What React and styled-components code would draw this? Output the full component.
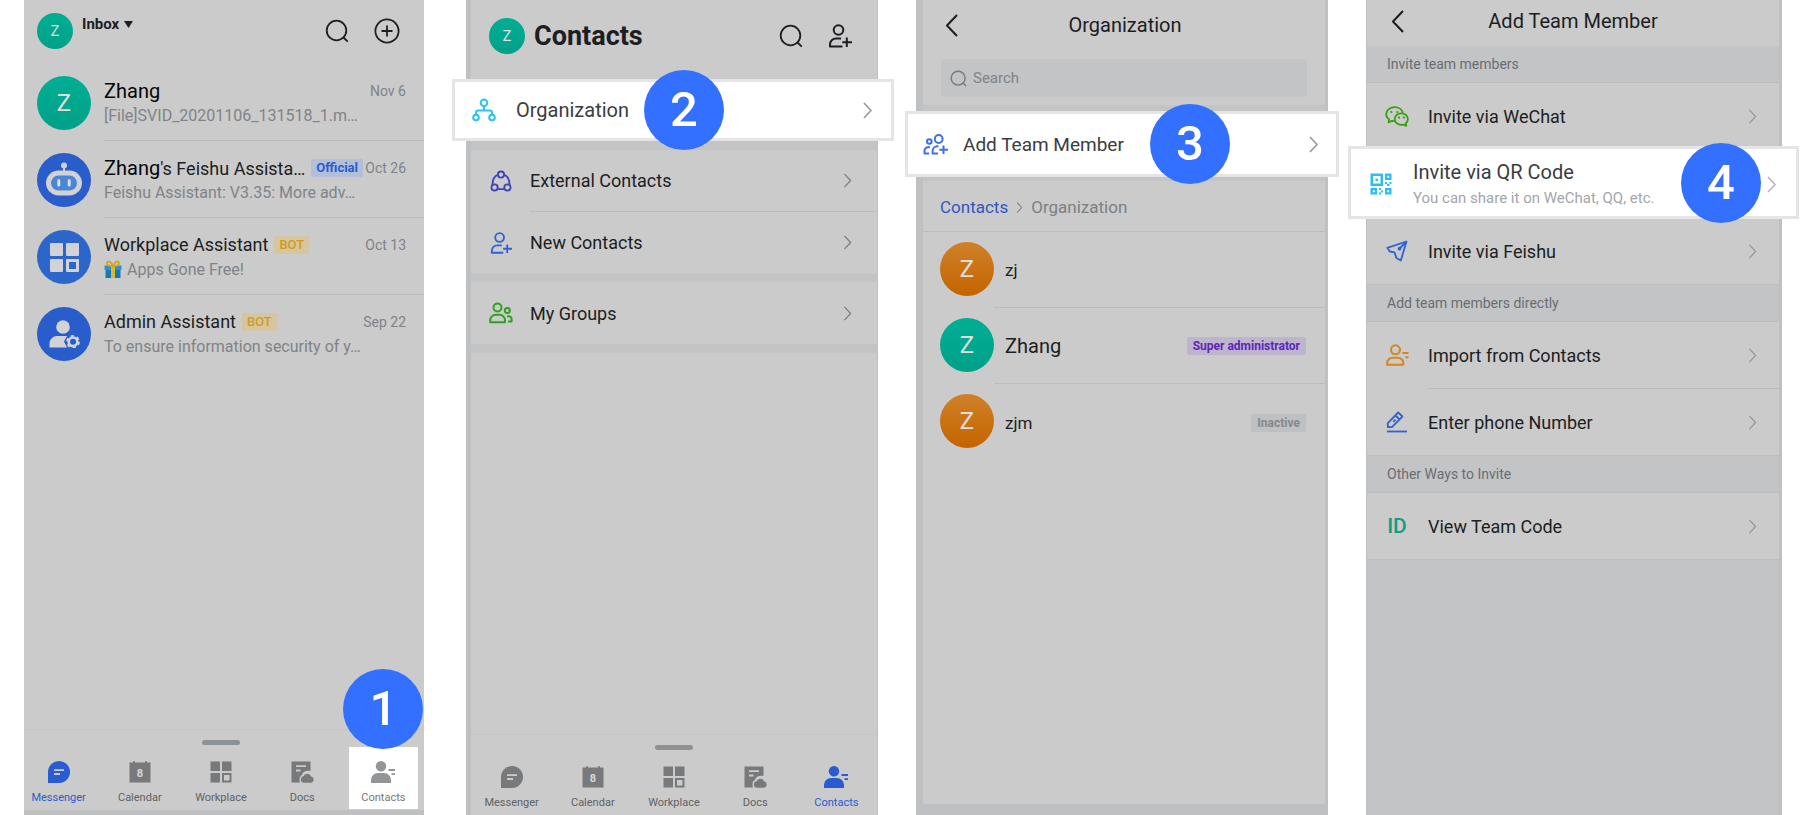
import React from "react";
import styled, { createGlobalStyle, css } from "styled-components";

const GlobalStyle = createGlobalStyle`
  * {
    box-sizing: border-box;
  }

  body {
    margin: 0;
    background: #fff;
    color: #1c1e22;
    font-family: Roboto, "Liberation Sans", sans-serif;
  }

  button,
  input {
    padding: 0;
    border: 0;
    background: none;
    color: inherit;
    font: inherit;
  }

  h1,
  h2,
  h3,
  p,
  ul {
    margin: 0;
    padding: 0;
    font-weight: 400;
  }

  svg {
    display: block;
    flex: none;
  }
`;

const Guide = styled.main`
  display: grid;
  grid-template-columns: 404fr 412fr 412fr 416fr;
  column-gap: 38px;
  min-height: 100vh;
  padding: 0 19px 0 24px;
`;

const Phone = styled.section`
  display: flex;
  flex-direction: column;
  min-width: 0;
  background: #cbcbcb;
  border: 0 solid #bec0c2;
`;

const InboxPhone = styled(Phone)`
  margin-right: 4px;
  border-bottom-width: 5px;
`;

const ContactsPhone = styled(Phone)`
  border-left-width: 5px;
  border-right-width: 1px;
`;

const OrganizationPhone = styled(Phone)`
  border-width: 0 3px 11px 7px;
`;

const InvitePhone = styled(Phone)`
  border-width: 0 3px 0 1px;
  background: #c3c4c6;
`;

const Header = styled.header`
  display: flex;
  flex: none;
  align-items: center;
  height: ${(p) => p.$height}px;
  padding: ${(p) => p.$padding};
`;

const Actions = styled.div`
  display: flex;
  gap: 25px;
  margin-left: auto;
`;

const IconButton = styled.button`
  display: block;
`;

const Avatar = styled.span`
  display: flex;
  flex: none;
  align-items: center;
  justify-content: center;
  width: ${(p) => p.$size}px;
  height: ${(p) => p.$size}px;
  border-radius: 50%;
  background: ${(p) => p.$bg || "linear-gradient(#00ae94, #00a188)"};
  color: #dedede;
  font-size: ${(p) => (p.$size > 40 ? 24 : 15)}px;
`;

const orange = "linear-gradient(#cf8128, #c56400)";

const InboxButton = styled.button`
  display: flex;
  align-items: center;
  align-self: flex-start;
  gap: 5px;
  height: 22px;
  margin: 13px 0 0 9px;
  font-size: 15px;
  font-weight: 700;
`;

const PageName = styled.h1`
  margin-left: 9px;
  font-size: 27px;
  font-weight: 700;
`;

const Messages = styled.ul`
  flex: 1;
  list-style: none;
`;

const Message = styled.li`
  display: flex;
  height: 77px;
  padding: 12px 0 0 13px;
  gap: 13px;
`;

const MessageBody = styled.div`
  flex: 1;
  min-width: 0;
  padding: 2px 18px 0 0;
  border-bottom: ${(p) => (p.$last ? "0" : "1px")} solid #bbbdbf;
`;

const MessageTitle = styled.div`
  display: flex;
  align-items: center;
  height: 25px;
  font-size: 18px;
  white-space: nowrap;

  h3 {
    font-size: inherit;
  }

  big {
    color: #050505;
    font-size: 20px;
  }

  time {
    margin-left: auto;
    color: #808387;
    font-size: 14px;
  }
`;

const Preview = styled.p`
  display: flex;
  align-items: center;
  gap: 5px;
  height: 24px;
  color: #808387;
  font-size: 16px;
  white-space: nowrap;
`;

const tagColors = {
  blue: css`
    background: #b3bfd9;
    color: #2a5bd0;
    font-weight: 700;
  `,
  yellow: css`
    background: #d5c69f;
    color: #d49a1c;
    font-weight: 500;
  `,
  purple: css`
    background: #bfb4cd;
    color: #5b26b8;
    font-weight: 700;
  `,
  grey: css`
    background: #bec0c2;
    color: #85888c;
    font-weight: 700;
  `,
};

const Tag = styled.span`
  height: 18px;
  margin-left: 6px;
  padding: 0 5px;
  border-radius: 2px;
  font-size: 13px;
  line-height: 18px;
  ${(p) => tagColors[p.$color]}
`;

const RoleTag = styled(Tag)`
  margin-left: auto;
  padding: 0 6px;
  font-size: 12px;
`;

const TabBar = styled.nav`
  flex: none;
  height: 81px;
  padding-top: 10px;
  border-top: 1px solid #c5c6c7;
`;

const TabBarInner = styled.div`
  margin-left: ${(p) => p.$shift || 0}px;
`;

const Grabber = styled.div`
  width: 38px;
  height: 5px;
  margin: 0 auto;
  border-radius: 3px;
  background: #8f9294;
`;

const Tabs = styled.div`
  display: grid;
  grid-template-columns: repeat(5, 1fr);
  padding-top: 2px;
`;

const TabCell = styled.div`
  position: relative;
  padding: 0 6px;
`;

const Tab = styled.button`
  display: flex;
  flex-direction: column;
  align-items: center;
  gap: 8px;
  width: 100%;
  height: 62px;
  padding-top: 14px;
  color: ${(p) => (p.$active ? "#2a5bd0" : "#77797b")};
  font-size: 11px;
  line-height: 13px;

  span {
    color: ${(p) => (p.$active ? "#2a5bd0" : "#5f6164")};
  }

  ${(p) =>
    p.$spotlight &&
    css`
      background: #fff;
      color: #939597;

      span {
        color: #75787b;
      }
    `}
`;

const Step = styled.strong`
  position: absolute;
  z-index: 2;
  top: calc(50% - 40px);
  left: ${(p) => p.$left}px;
  width: 80px;
  height: 80px;
  border-radius: 50%;
  background: #3370ff;
  color: #fff;
  font-size: 49px;
  font-weight: 500;
  line-height: 80px;
  text-align: center;
`;

const TabStep = styled(Step)`
  top: -78px;
  left: calc(50% - 40px);
`;

const Row = styled.button`
  display: flex;
  flex: none;
  align-items: center;
  width: 100%;
  height: ${(p) => p.$height || 61}px;
  padding: 0 ${(p) => p.$end || 25}px 0 18px;
  font-size: 18px;
  text-align: left;

  > svg:last-child {
    margin-left: auto;
    color: ${(p) => p.$arrow || "#808386"};
  }
`;

const RowIcon = styled.span`
  display: flex;
  flex: none;
  align-items: center;
  justify-content: center;
  width: 24px;
  margin-right: ${(p) => p.$gap || 17}px;
  color: ${(p) => p.$color};
  font-size: 21px;
  font-weight: 500;
`;

const Separator = styled.hr`
  flex: none;
  width: auto;
  height: 1px;
  margin: 0 0 0 ${(p) => p.$inset || 0}px;
  border: 0;
  background: #bcbdbf;
`;

const Band = styled.div`
  flex: none;
  height: ${(p) => p.$height}px;
  background: #c2c4c6;
`;

const Spotlight = styled.div`
  position: relative;
  z-index: 1;
  flex: none;
  margin: ${(p) => p.$margin};
  border: 3px solid #e5e5e5;
  background: #fff;
`;

const SpotlightRow = styled(Row)`
  height: ${(p) => p.$height}px;
  padding: ${(p) => p.$padding};
  color: #3a3d42;
  font-size: ${(p) => p.$size || 20}px;

  small {
    display: block;
    margin-top: 4px;
    color: #a3a6ab;
    font-size: 15px;
    line-height: 20px;
  }
`;

const TitleBar = styled(Header)`
  display: grid;
  grid-template-columns: 34px 1fr 34px;

  h1 {
    font-size: 20px;
    text-align: center;
  }
`;

const SearchBox = styled.label`
  display: flex;
  flex: none;
  align-items: center;
  gap: 6px;
  height: 38px;
  margin: 9px 18px 8px;
  padding: 0 9px;
  border-radius: 4px;
  background: #c2c4c6;
  color: #76797d;

  input {
    flex: 1;
    min-width: 0;
    font-size: 15px;
    outline: 0;
  }

  input::placeholder {
    color: #808387;
    opacity: 1;
  }
`;

const Breadcrumb = styled.nav`
  display: flex;
  flex: none;
  align-items: center;
  gap: 8px;
  height: 50px;
  padding: 2px 17px 0;
  color: #7c7f83;
  font-size: 17px;

  a {
    color: #2f58bd;
    text-decoration: none;
  }
`;

const MemberList = styled.ul`
  border-top: 1px solid #bbbdbf;
  list-style: none;
`;

const Member = styled.li`
  display: flex;
  height: 76px;
  padding: 10px 0 0 17px;
`;

const MemberBody = styled.div`
  display: flex;
  flex: 1;
  align-items: center;
  padding: 0 19px 9px 11px;
  border-bottom: ${(p) => (p.$last ? "0" : "1px")} solid #bbbdbf;
  font-size: ${(p) => p.$size || 17}px;
`;

const Group = styled.div`
  display: flex;
  flex-direction: column;
  background: #cbcbcb;
`;

const GroupTitle = styled.h2`
  height: ${(p) => (p.$first ? 37 : 38)}px;
  padding-left: 20px;
  border: 0 solid #bbbdbf;
  border-width: ${(p) => (p.$first ? "0 0 1px" : "1px 0")};
  background: #c2c4c6;
  color: #6a6d71;
  font-size: 14px;
  line-height: 37px;
`;

const stroke = {
  fill: "none",
  stroke: "currentColor",
  strokeWidth: 2,
  strokeLinejoin: "round",
};

const SearchIcon = ({ size = 24, weight = 1.8 }) => (
  <svg width={size} height={size} viewBox="0 0 24 24" {...stroke} strokeWidth={weight}>
    <circle cx="11.5" cy="11.5" r="9.8" />
    <path d="M18.5 18.5l4.2 4.2" />
  </svg>
);

const PlusCircleIcon = () => (
  <svg width="26" height="26" viewBox="0 0 26 26" {...stroke} strokeWidth="1.8">
    <circle cx="13" cy="13" r="11.6" />
    <path d="M13 7.5v11M7.5 13h11" />
  </svg>
);

const Chevron = ({ width = 9, height = 17 }) => (
  <svg width={width} height={height} viewBox="0 0 9 17" {...stroke} strokeWidth="1.6">
    <path d="M1 1l7 7.5L1 16" />
  </svg>
);

const BackIcon = () => (
  <svg width="13" height="23" viewBox="0 0 13 23" {...stroke}>
    <path d="M12 1L2 11.5 12 22" />
  </svg>
);

const UserPlusIcon = ({ size = 24 }) => (
  <svg width={size} height={size} viewBox="0 0 24 24" {...stroke}>
    <circle cx="10.5" cy="6" r="4.8" />
    <path d="M13 14.5H8a6 6 0 0 0-6 6v2.1h12.5M18.8 13.5v9.500M14.3 18.3H24" />
  </svg>
);

const OrgIcon = () => (
  <svg width="24" height="24" viewBox="0 0 24 24" {...stroke}>
    <circle cx="12" cy="4.7" r="3.3" />
    <path d="M12 8v4.5M4 16.5v-1.7a2.3 2.3 0 0 1 2.3-2.3h11.4a2.3 2.3 0 0 1 2.3 2.3v1.7" />
    <circle cx="4" cy="19.6" r="2.8" />
    <circle cx="20" cy="19.6" r="2.8" />
  </svg>
);

const ExternalIcon = () => (
  <svg width="22" height="22" viewBox="0 0 24 24" {...stroke}>
    <circle cx="12" cy="5" r="3.4" />
    <circle cx="5" cy="19" r="3.4" />
    <circle cx="19" cy="19" r="3.4" />
    <path d="M8.6 5.2C4.8 6.8 2.6 11 2.8 16.2M15.4 5.2c3.8 1.6 6 5.8 5.8 11M8.2 20.8h7.6" />
  </svg>
);

const GroupIcon = () => (
  <svg width="24" height="22" viewBox="0 0 24 22" {...stroke}>
    <circle cx="8.5" cy="5.5" r="4" />
    <path d="M1.2 20.3v-2a5.5 5.5 0 0 1 5.5-5.5h3.8a5.5 5.5 0 0 1 5.5 5.5v2z" />
    <circle cx="18.3" cy="8.4" r="2.5" />
    <path d="M18 14.2h1.6a3 3 0 0 1 3 3v2.4h-3.6" />
  </svg>
);

const TeamPlusIcon = () => (
  <svg width="25" height="21" viewBox="0 0 25 21" {...stroke}>
    <circle cx="15.7" cy="5" r="3.9" />
    <circle cx="6.3" cy="7.5" r="2.3" />
    <path d="M15.5 12.3h-1.1a4.8 4.8 0 0 0-4.8 4.8v2.3H15M7 13.2H5.3A3.8 3.8 0 0 0 1.5 17v2.4h4.6M20.5 11.5V20M16.3 15.8H25" />
  </svg>
);

const WeChatIcon = () => (
  <svg width="24" height="21" viewBox="0 0 24 21" {...stroke} strokeWidth="1.8">
    <path d="M9.6 15.1a11 11 0 0 1-2.5-.3L3.6 16.4l.4-3.1C2.2 12 1.2 10.2 1.2 8.2c0-4 3.9-7.1 8.5-7.1 4 0 7.4 2.4 8.2 5.6" />
    <path d="M16.3 7.3c3.7 0 6.6 2.5 6.6 5.7 0 1.7-.8 3.1-2.1 4.2l.5 2.6-2.9-1.2c-.7.2-1.4.2-2.1.2-3.7 0-6.6-2.6-6.6-5.8s2.9-5.7 6.6-5.7z" />
    <path d="M6.3 6h.1M12.3 6h.1M14 11.6h.1M18.8 11.6h.1" strokeWidth="2.2" strokeLinecap="round" />
  </svg>
);

const QrIcon = () => (
  <svg width="22" height="22" viewBox="0 0 22 22" fill="currentColor">
    <path fillRule="evenodd" d="M.5.5H13V13H.5zM3 3v7.5h7.5V3z" />
    <path d="M5.5 5.5H8V8H5.5z" />
    <path fillRule="evenodd" d="M15 .5h6.5V7H15zM17.2 2.8v2h2v-2zM.5 15H7v6.5H.5zM2.8 17.2v2h2v-2zM15 15h6.5v6.5H15zM17.2 17.2v2h2v-2z" />
    <path d="M15 9h2v2h-2zM19.5 9h2v2h-2zM17 11h2.5v2H17zM9 15h2v2H9zM11 17.5h2v2h-2zM9 19.5h2v2H9z" />
  </svg>
);

const PlaneIcon = () => (
  <svg width="22" height="22" viewBox="0 0 22 22" {...stroke} strokeWidth="1.8">
    <path d="M20.5 1.5L1.3 7.8l2.5 3.7 4.7.8 1.9 5.600 4.400 2.600z" />
    <path d="M20.5 1.5l-6.800 7" />
    <circle cx="13.5" cy="8.7" r="1" fill="currentColor" />
  </svg>
);

const ImportIcon = () => (
  <svg width="23" height="22" viewBox="0 0 23 22" {...stroke}>
    <circle cx="9.5" cy="5.8" r="4.5" />
    <path d="M1.2 20.7v-1.5a5.5 5.5 0 0 1 5.5-5.5h5.1a5.5 5.5 0 0 1 5.5 5.5v1.5zM16.5 9h6M19.5 13.3h3" />
  </svg>
);

const PenIcon = () => (
  <svg width="22" height="22" viewBox="0 0 22 22" {...stroke} strokeWidth="1.8">
    <path d="M1.8 12.2L12.2 1.5l4.2 4L6 16.2H1.8zM9.5 4.5l4 4M7.3 10.8l2.2-2.2" />
    <path d="M1 20.5h20" />
  </svg>
);

const BotIcon = () => (
  <svg width="54" height="54" viewBox="0 0 54 54">
    <circle cx="27" cy="12.5" r="3" fill="#d0d0d4" />
    <path d="M26 14h2v6h-2z" fill="#d0d0d4" />
    <rect x="9" y="17.5" width="36" height="25" rx="12.5" fill="#d2d2d4" />
    <rect x="14" y="22.5" width="26" height="15" rx="7.5" fill="#4a86d8" />
    <path d="M21.8 27.5V32M32.2 27.5V32" stroke="#dcdee2" strokeWidth="3" strokeLinecap="round" />
  </svg>
);

const AppsIcon = () => (
  <svg width="30" height="30" viewBox="0 0 30 30" fill="#d2d3d6">
    <rect x="1" y="1" width="13" height="13" rx="1" />
    <rect x="17" y="1" width="13" height="13" rx="1" />
    <rect x="1" y="17" width="13" height="13" rx="1" />
    <path fillRule="evenodd" d="M18 17h11a1 1 0 0 1 1 1v11a1 1 0 0 1-1 1H18a1 1 0 0 1-1-1V18a1 1 0 0 1 1-1zm2 3v7h7v-7z" />
  </svg>
);

const AdminIcon = () => (
  <svg width="32" height="28" viewBox="0 0 32 28" fill="#d2d3d6">
    <circle cx="15" cy="7" r="6.8" />
    <path d="M1.5 27.5v-4A7.5 7.5 0 0 1 9 16h10l-3 5.500 3 6z" />
    <circle cx="25" cy="21.8" r="4.3" fill="none" stroke="#d2d3d6" strokeWidth="2.6" />
    <circle
      cx="25"
      cy="21.8"
      r="6"
      fill="none"
      stroke="#d2d3d6"
      strokeWidth="1.8"
      strokeDasharray="3.2 3.08"
    />
  </svg>
);

const GiftIcon = () => (
  <svg width="18" height="19" viewBox="0 0 18 19">
    <path d="M1.5 9h15v9h-15z" fill="#1679b4" />
    <path d="M.5 5.5h17V10H.5z" fill="#2b93cb" />
    <path d="M7 5.5h4V18H7z" fill="#dfb62c" />
    <path d="M9 6C6 6 2.5 5.5 3 3s4-2 6 3c2-5 5.5-5.5 6-3s-3 3-6 3z" fill="none" stroke="#d3a51f" strokeWidth="1.8" />
  </svg>
);

const tabIcons = {
  Messenger: (
    <svg width="22" height="22" viewBox="0 0 22 22">
      <path d="M0 22V11a11 11 0 1 1 11 11z" fill="currentColor" />
      <path d="M6 9.2h10M6 13h6" stroke="#cbcbcb" strokeWidth="1.8" />
    </svg>
  ),
  Calendar: (
    <svg width="22" height="22" viewBox="0 0 22 22">
      <path d="M.5 1.5H4V.3h2v1.2h10V.3h2v1.2h3.5v20H.5z" fill="currentColor" />
      <text x="11" y="15.5" fill="#d8d8d8" fontSize="11" fontWeight="700" textAnchor="middle">
        8
      </text>
    </svg>
  ),
  Workplace: (
    <svg width="22" height="22" viewBox="0 0 22 22" fill="currentColor">
      <path d="M.5.5H10V10H.5zM12 .5h9.5V10H12zM.5 12H10v9.5H.5z" />
      <path fillRule="evenodd" d="M12 12h9.5v9.5H12zM14 14v5.5h5.5V14z" />
    </svg>
  ),
  Docs: (
    <svg width="23" height="22" viewBox="0 0 23 22">
      <path d="M.5.5h19V10c-5-1-8 1-8.500 4-2.500 1-3 4-2 7.500H.5z" fill="currentColor" />
      <path d="M5 5.2h10M5 9.5h4.500" stroke="#cbcbcb" strokeWidth="1.8" />
      <path d="M13 21.8a3.3 3.3 0 0 1-.6-6.5 4.2 4.2 0 0 1 7.8.2 3.2 3.2 0 0 1-.5 6.3z" fill="currentColor" />
    </svg>
  ),
  Contacts: (
    <svg width="24" height="22" viewBox="0 0 24 22">
      <circle cx="10" cy="5.2" r="5.2" fill="currentColor" />
      <path d="M0 22v-3a7 7 0 0 1 7-7h6a7 7 0 0 1 7 7v3z" fill="currentColor" />
      <path d="M17.5 9H24M20.500 13.200H24" stroke="currentColor" strokeWidth="1.8" />
    </svg>
  ),
};

const BottomTabs = ({ active, spotlight, shift }) => (
  <TabBar>
    <TabBarInner $shift={shift}>
      <Grabber />
      <Tabs>
        {Object.keys(tabIcons).map((name) => (
          <TabCell key={name}>
            <Tab $active={name === active} $spotlight={name === spotlight}>
              {tabIcons[name]}
              <span>{name}</span>
            </Tab>
            {name === spotlight && <TabStep>1</TabStep>}
          </TabCell>
        ))}
      </Tabs>
    </TabBarInner>
  </TabBar>
);

const MenuRow = ({ icon, color, height, children }) => (
  <Row $height={height}>
    <RowIcon $color={color}>{icon}</RowIcon>
    {children}
    <Chevron height={15} />
  </Row>
);

const InviteRow = ({ icon, color, children }) => (
  <Row $height={66} $end={22} $arrow="#999b9d">
    <RowIcon $color={color} $gap={19}>
      {icon}
    </RowIcon>
    {children}
    <Chevron height={15} />
  </Row>
);

const Inbox = () => (
  <InboxPhone>
    <Header $height={64} $padding="0 24px 2px 13px">
      <Avatar $size={36}>Z</Avatar>
      <InboxButton>
        Inbox
        <svg width="9" height="7" viewBox="0 0 9 7" fill="currentColor">
          <path d="M0 0h9L4.5 7z" />
        </svg>
      </InboxButton>
      <Actions>
        <IconButton aria-label="Search">
          <SearchIcon />
        </IconButton>
        <IconButton aria-label="Create">
          <PlusCircleIcon />
        </IconButton>
      </Actions>
    </Header>
    <Messages>
      <Message>
        <Avatar $size={54}>Z</Avatar>
        <MessageBody>
          <MessageTitle>
            <h3>
              <big>Zhang</big>
            </h3>
            <time>Nov 6</time>
          </MessageTitle>
          <Preview>[File]SVID_20201106_131518_1.m…</Preview>
        </MessageBody>
      </Message>
      <Message>
        <Avatar $size={54} $bg="#285dcb">
          <BotIcon />
        </Avatar>
        <MessageBody>
          <MessageTitle>
            <h3>
              <big>Zhang</big>'s Feishu Assista…
            </h3>
            <Tag $color="blue">Official</Tag>
            <time>Oct 26</time>
          </MessageTitle>
          <Preview>Feishu Assistant: V3.35: More adv…</Preview>
        </MessageBody>
      </Message>
      <Message>
        <Avatar $size={54} $bg="#2d66cb">
          <AppsIcon />
        </Avatar>
        <MessageBody>
          <MessageTitle>
            <h3>Workplace Assistant</h3>
            <Tag $color="yellow">BOT</Tag>
            <time>Oct 13</time>
          </MessageTitle>
          <Preview>
            <GiftIcon /> Apps Gone Free!
          </Preview>
        </MessageBody>
      </Message>
      <Message>
        <Avatar $size={54} $bg="#285dcb">
          <AdminIcon />
        </Avatar>
        <MessageBody $last>
          <MessageTitle>
            <h3>Admin Assistant</h3>
            <Tag $color="yellow">BOT</Tag>
            <time>Sep 22</time>
          </MessageTitle>
          <Preview>To ensure information security of y…</Preview>
        </MessageBody>
      </Message>
    </Messages>
    <BottomTabs active="Messenger" spotlight="Contacts" shift={-6} />
  </InboxPhone>
);

const Contacts = () => (
  <ContactsPhone>
    <Header $height={79} $padding="0 25px 8px 18px">
      <Avatar $size={36}>Z</Avatar>
      <PageName>Contacts</PageName>
      <Actions>
        <IconButton aria-label="Search">
          <SearchIcon />
        </IconButton>
        <IconButton aria-label="Add contact">
          <UserPlusIcon />
        </IconButton>
      </Actions>
    </Header>
    <Spotlight $margin="0 -17px 0 -19px">
      <SpotlightRow $height={56} $padding="0 19px 0 17px" $arrow="#96989f">
        <RowIcon $color="#29c3f5" $gap={20}>
          <OrgIcon />
        </RowIcon>
        Organization
        <Chevron />
      </SpotlightRow>
      <Step $left={189}>2</Step>
    </Spotlight>
    <Band $height={9} />
    <MenuRow icon={<ExternalIcon />} color="#3f44b4">
      External Contacts
    </MenuRow>
    <Separator $inset={59} />
    <MenuRow icon={<UserPlusIcon size={22} />} color="#2f62d4">
      New Contacts
    </MenuRow>
    <Band $height={9} />
    <MenuRow icon={<GroupIcon />} color="#2ea121" height={62}>
      My Groups
    </MenuRow>
    <Band $height={9} />
    <Messages as="div" />
    <BottomTabs active="Contacts" />
  </ContactsPhone>
);

const Organization = () => (
  <OrganizationPhone>
    <TitleBar $height={50} $padding="0 20px 0 22px">
      <IconButton aria-label="Back">
        <BackIcon />
      </IconButton>
      <h1>Organization</h1>
    </TitleBar>
    <SearchBox>
      <SearchIcon size={17} weight={2} />
      <input type="search" placeholder="Search" aria-label="Search" />
    </SearchBox>
    <Band $height={6} />
    <Spotlight $margin="0 -14px 0 -18px">
      <SpotlightRow $height={60} $padding="0 18px 0 15px" $size={19} $arrow="#96989f">
        <RowIcon $color="#3f6fe8" $gap={16}>
          <TeamPlusIcon />
        </RowIcon>
        Add Team Member
        <Chevron />
      </SpotlightRow>
      <Step $left={242}>3</Step>
    </Spotlight>
    <Band $height={4} />
    <Breadcrumb>
      <a href="#contacts">Contacts</a>
      <Chevron width={7} height={11} />
      <span>Organization</span>
    </Breadcrumb>
    <MemberList>
      <Member>
        <Avatar $size={54} $bg={orange}>
          Z
        </Avatar>
        <MemberBody>zj</MemberBody>
      </Member>
      <Member>
        <Avatar $size={54}>Z</Avatar>
        <MemberBody $size={20}>
          Zhang
          <RoleTag $color="purple">Super administrator</RoleTag>
        </MemberBody>
      </Member>
      <Member>
        <Avatar $size={54} $bg={orange}>
          Z
        </Avatar>
        <MemberBody $last>
          zjm
          <RoleTag $color="grey">Inactive</RoleTag>
        </MemberBody>
      </Member>
    </MemberList>
  </OrganizationPhone>
);

const AddTeamMember = () => (
  <InvitePhone>
    <Group>
      <TitleBar $height={46} $padding="0 24px 4px 24px">
        <IconButton aria-label="Back">
          <BackIcon />
        </IconButton>
        <h1>Add Team Member</h1>
      </TitleBar>
      <GroupTitle $first>Invite team members</GroupTitle>
      <InviteRow icon={<WeChatIcon />} color="#37a10c">
        Invite via WeChat
      </InviteRow>
      <Spotlight $margin="-3px -20px -1px -19px">
        <SpotlightRow $height={67} $padding="3px 20px 0 18px" $arrow="#b4b6b9">
          <RowIcon $color="#29bff5" $gap={20}>
            <QrIcon />
          </RowIcon>
          <div>
            Invite via QR Code
            <small>You can share it on WeChat, QQ, etc.</small>
          </div>
          <Chevron />
        </SpotlightRow>
        <Step $left={330}>4</Step>
      </Spotlight>
      <InviteRow icon={<PlaneIcon />} color="#2f62d4">
        Invite via Feishu
      </InviteRow>
      <GroupTitle>Add team members directly</GroupTitle>
      <InviteRow icon={<ImportIcon />} color="#d4861f">
        Import from Contacts
      </InviteRow>
      <Separator $inset={61} />
      <InviteRow icon={<PenIcon />} color="#2f62d4">
        Enter phone Number
      </InviteRow>
      <GroupTitle>Other Ways to Invite</GroupTitle>
      <InviteRow icon="ID" color="#109e88">
        View Team Code
      </InviteRow>
      <Separator />
    </Group>
  </InvitePhone>
);

const App = () => (
  <>
    <GlobalStyle />
    <Guide>
      <Inbox />
      <Contacts />
      <Organization />
      <AddTeamMember />
    </Guide>
  </>
);

export default App;
